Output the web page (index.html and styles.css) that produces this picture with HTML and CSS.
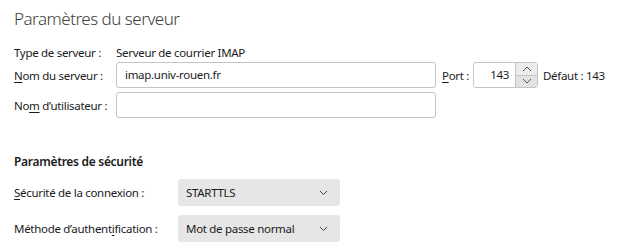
FILE: index.html
```html
<!DOCTYPE html>
<html lang="fr">

<head>
    <meta charset="UTF-8">
    <title>Paramètres du serveur</title>
    <link rel="stylesheet" href="styles.css">
</head>

<body>
    <h1 class="titre">Paramètres du serveur</h1>

    <div class="serveur">
        <div class="ligne ligne-type">
            <span class="label">Type de serveur :</span>
            <span class="valeur">Serveur de courrier IMAP</span>
        </div>
        <div class="ligne">
            <span class="label"><u>N</u>om du serveur :</span>
            <div class="champ">imap.univ-rouen.fr</div>
            <span class="port-label"><u>P</u>ort :</span>
            <div class="port">
                <span class="port-val">143</span>
                <div class="spin">
                    <span class="spin-up">
                        <svg width="10" height="6" viewBox="0 0 10 6"><path d="M1 5 L5 1 L9 5" fill="none" stroke="#555" stroke-width="1"/></svg>
                    </span>
                    <span class="spin-down">
                        <svg width="10" height="6" viewBox="0 0 10 6"><path d="M1 1 L5 5 L9 1" fill="none" stroke="#555" stroke-width="1"/></svg>
                    </span>
                </div>
            </div>
            <span class="defaut">Défaut : 143</span>
        </div>
        <div class="ligne">
            <span class="label">No<u>m</u> d’utilisateur :</span>
            <div class="champ"></div>
        </div>
    </div>

    <h2 class="soustitre">Paramètres de sécurité</h2>

    <div class="securite">
        <div class="ligne">
            <span class="label2"><u>S</u>écurité de la connexion :</span>
            <div class="select">
                <span>STARTTLS</span>
                <svg width="9" height="6" viewBox="0 0 9 6"><path d="M1 1 L4.5 4.5 L8 1" fill="none" stroke="#444" stroke-width="1"/></svg>
            </div>
        </div>
        <div class="ligne">
            <span class="label2">Méthode d’authent<u>i</u>fication :</span>
            <div class="select">
                <span>Mot de passe normal</span>
                <svg width="9" height="6" viewBox="0 0 9 6"><path d="M1 1 L4.5 4.5 L8 1" fill="none" stroke="#444" stroke-width="1"/></svg>
            </div>
        </div>
    </div>
</body>

</html>
```

FILE: styles.css
```css
body {
    margin: 0;
    padding: 0 14px;
    font-family: "Noto Sans", sans-serif;
    font-size: 11.5px;
    letter-spacing: -0.3px;
    color: #1b1b1b;
    background-color: #fff;
}

u {
    text-decoration-thickness: 1px;
    text-underline-offset: 2px;
}

.titre {
    margin: 0;
    padding-top: 7px;
    font-size: 17px;
    font-weight: 300;
    letter-spacing: -0.5px;
    line-height: 24px;
    color: #3d3d3d;
}

.serveur {
    margin-top: 13px;
    display: flex;
    flex-direction: column;
    gap: 4px;
}

.ligne {
    display: flex;
    align-items: center;
}

.ligne-type {
    height: 16px;
    margin-bottom: -2px;
}

.label {
    width: 102px;
    flex-shrink: 0;
}

.valeur {
    margin-left: 0;
}

.champ {
    box-sizing: border-box;
    width: 320px;
    height: 26px;
    border: 1px solid #c4c4c4;
    border-radius: 3px;
    padding: 0 8px;
    line-height: 24px;
}

.port-label {
    margin-left: 6px;
    width: 31px;
}

.port {
    box-sizing: border-box;
    display: flex;
    width: 65px;
    height: 26px;
    border: 1px solid #c4c4c4;
    border-radius: 3px;
}

.port-val {
    flex: 1;
    text-align: right;
    padding-right: 6px;
    line-height: 24px;
}

.spin {
    width: 21px;
    display: flex;
    flex-direction: column;
    border-left: 1px solid #c4c4c4;
}

.spin-up,
.spin-down {
    flex: 1;
    display: flex;
    align-items: center;
    justify-content: center;
    background-color: #ececec;
}

.spin-down {
    background-color: #e2e2e2;
    border-top: 1px solid #c9c9c9;
}

.defaut {
    margin-left: 5px;
}

.soustitre {
    margin: 36px 0 0;
    font-size: 12px;
    font-weight: 600;
    line-height: 16px;
}

.securite {
    margin-top: 9px;
    display: flex;
    flex-direction: column;
    gap: 9px;
}

.label2 {
    width: 164px;
    flex-shrink: 0;
}

.select {
    box-sizing: border-box;
    width: 162px;
    height: 27px;
    display: flex;
    align-items: center;
    justify-content: space-between;
    padding: 0 12px 0 8px;
    background-color: #e6e6e6;
    border-radius: 3px;
}
```
